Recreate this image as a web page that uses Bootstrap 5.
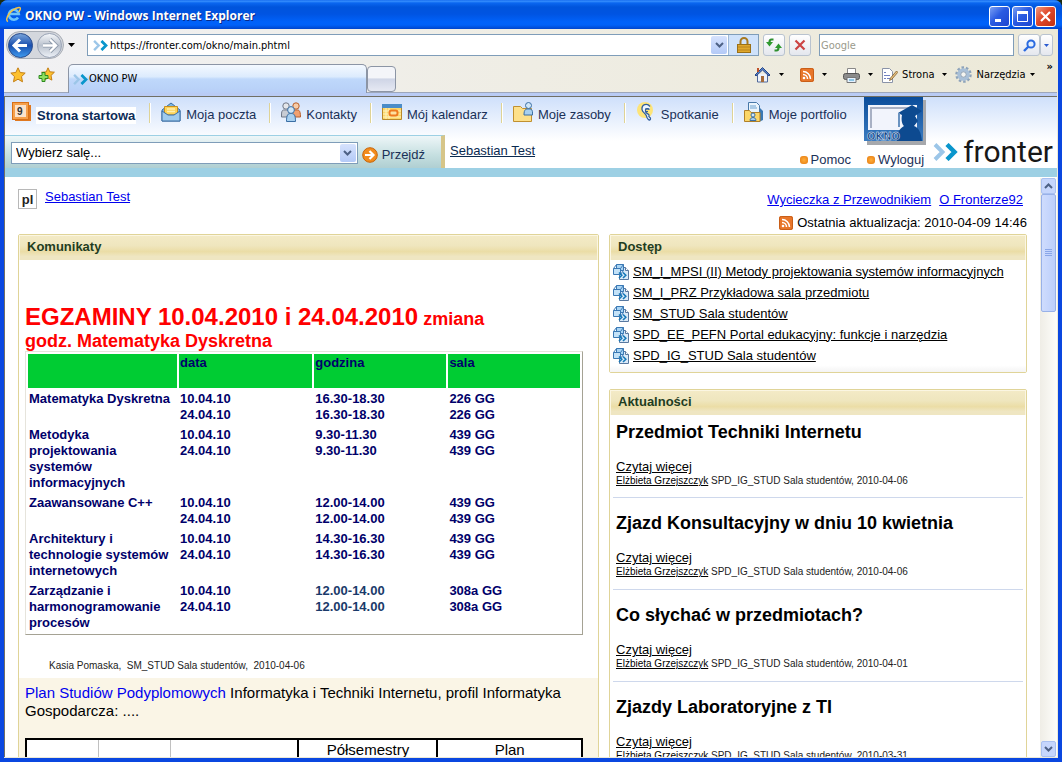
<!DOCTYPE html>
<html lang="pl">
<head>
<meta charset="utf-8">
<meta name="viewport" content="width=device-width, initial-scale=1">
<title>OKNO PW - Windows Internet Explorer</title>
<link href="https://cdn.jsdelivr.net/npm/bootstrap@5.3.0/dist/css/bootstrap.min.css" rel="stylesheet">
<style>
  body { font: 13px/16px "Liberation Sans", Arial, sans-serif; color: #000; background: #1c2b10; }
  button { padding: 0; border: 0; background: none; color: inherit; }
  svg { display: block; flex: none; }
  .app-window { border-radius: 8px 8px 0 0; background: #0a47e0; }
  .ui-font { font: 11px/14px "DejaVu Sans Condensed", "DejaVu Sans", sans-serif; }

  /* title bar */
  .titlebar { flex: none; height: 29px; padding: 0 6px; color: #fff;
    background: linear-gradient(#0a5fea 0, #3a92ff 1px, #0a66f0 3px, #0054dc 7px, #0054e2 14px, #0062fa 22px, #0061f8 25px, #0045cc 29px); }
  .titlebar h1 { font: bold 12px/16px "Open Sans", sans-serif; text-shadow: 1px 1px 0 #0a2a8a; padding-top: 2px; }
  .cap-group { gap: 2px; }
  .cap-btn { width: 21px; height: 21px; border: 1px solid #fff; border-radius: 3px;
    background: linear-gradient(135deg, #7ba0f4, #2a5be2 45%, #1e46d0); display: flex; align-items: center; justify-content: center; }
  .cap-close { background: linear-gradient(135deg, #f09a80, #e0482a 45%, #c03010); }

  /* browser frame */
  .frame-body { margin: 0 4px 4px; border-right: 1px solid #ece9d8; border-bottom: 1px solid #ece9d8; background: #fff; }
  .toolbars { flex: none; background: linear-gradient(90deg, #f1f1f4, #efede4 50%, #ece9d8); }
  .addr-row { height: 32px; padding: 0 4px 0 2px; }
  .round-nav { border-radius: 16px; border: 1px solid #a9aeb6; background: #d4d7dd; height: 28px; padding: 0 1px; }
  .field-box { border: 1px solid #7f9db9; background: #fff; height: 22px; }
  .field-box input { border: 0; outline: 0; padding: 0 1px; background: none; min-width: 0; height: 20px; }
  .field-box input::placeholder { color: #9a9a8c; opacity: 1; }
  .combo-arrow { width: 16px; background: linear-gradient(#d6e2fd, #b4caf7); border-radius: 2px; margin: 1px; display: flex; align-items: center; justify-content: center; }
  .lock-cell { width: 30px; background: #cfe2fb; border-left: 1px solid #9db8d6; display: flex; align-items: center; justify-content: center; }
  .tool-btn { width: 22px; height: 22px; border: 1px solid #b9c3cf; border-radius: 3px; background: linear-gradient(#fff, #e4e7ee); display: flex; align-items: center; justify-content: center; }
  .tool-btn-slim { width: 13px; }
  .search-field { width: 195px; }
  .tab-row { height: 32px; border-bottom: 1px solid #9da7bb; padding-left: 6px; }
  .star-group { padding-right: 13px; }
  .page-tab { width: 299px; height: 29px; border: 1px solid #8c95a5; border-bottom: 0; border-radius: 5px 5px 0 0;
    background: linear-gradient(#f4f9ff 0, #dcebfd 42%, #bfd8fb 50%, #b9d2f8 85%, #b8cdf6); margin-bottom: -1px; padding: 0 3px; }
  .new-tab { width: 29px; height: 26px; border: 1px solid #8c95a5; border-radius: 4px; background: linear-gradient(#f4f5f9 45%, #cfd5e6 50%, #e6e9f3); }
  .blue-strip { height: 4px; background: #b9cbf4; border-bottom: 1px solid #716f64; }

  /* portal header */
  .portal { border-left: 1px solid #716f64; }
  .portal-head { flex: none; background: linear-gradient(#cfe0fb 0, #fff 44px); border-bottom: 9px solid #9dd0e4; color: #1a3158; }
  .portal-head a { color: inherit; text-decoration: none; }
  .top-row { height: 38px; padding-left: 7px; }
  .nav-list { height: 36px; }
  .nav-list li { display: flex; align-items: center; height: 32px; }
  .nav-list li + li::before { content: ""; width: 2px; height: 20px; margin: 0 10px 0 13px; background: #ded396; border-right: 1px solid #fff; }
  .nav-list svg { margin-right: 5px; margin-top: -2px; }
  .nav-list span { padding-top: 4px; }
  .nav-list .now { background: #fff; padding: 1px 1px 0; margin: 4px 0 0 -1px; font-weight: bold; color: #0d2c58; }
  .okno-logo { margin-left: 17px; margin-bottom: -12px; }
  .low-row { height: 33px; }
  .room-panel { width: 440px; height: 33px; border-top: 1px solid #9dd0e4; border-right: 4px solid #d6c588; background: linear-gradient(#eef6f8, #c5dfe0 60%, #b0cfd2); padding: 2px 0 0 6px; }
  .room-panel select { appearance: none; border: 0; outline: 0; background: #fff; padding: 0 4px; font: 13px/18px "Liberation Sans", Arial, sans-serif; height: 20px; }
  .portal-head a.user-link { text-decoration: underline; margin-left: 5px; color: #0a2a50; }
  .bullet { width: 8px; height: 8px; border-radius: 3px; background: radial-gradient(#ffae3a, #e57a10); margin-right: 3px; }
  .brand-name { font: 400 30px/30px "Open Sans", Roboto, sans-serif; font-family: Roboto, sans-serif; color: #181818; margin-left: 4px; }

  /* scrolling page */
  .page-area { padding: 12px 13px 0; overflow: hidden; }
  .page-area a { color: #000; text-decoration: underline; }
  .page-area a.plain-blue { color: #0000ee; }
  .page-top { margin-bottom: 3px; }
  .tour-links { padding-top: 3px; margin-bottom: 7px; }
  .lang-box { width: 19px; height: 20px; border: 1px solid #b8b8b8; font-weight: bold; color: #222; text-align: center; line-height: 20px; }
  .columns { display: grid; grid-template-columns: 581fr 418fr; gap: 10px; align-items: start; }
  .panel { border: 1px solid #e0d498; border-radius: 2px; background: #fff; }
  .panel h2 { font: bold 13px/16px "Liberation Sans", Arial, sans-serif; color: #1f3d1f; height: 25px; margin: 0; padding: 3px 7px 0;
    border: 1px solid #fbf6e2; border-bottom: 0; background: linear-gradient(#f3eac6 0, #efe6be 40%, #ebdda6 65%, #efe6c2 85%); }
  .notice { padding: 42px 6px 0; }
  .notice h3 { font: bold 18px/20px "Liberation Sans", Arial, sans-serif; color: #f00; margin: 0; }
  .notice h3 b { font-size: 24px; line-height: 29px; }
  .exam { width: 558px; max-width: 100%; border: 1px solid; border-color: #e6e4dc #a5a294 #a5a294 #e6e4dc; border-collapse: separate; border-spacing: 2px; color: #00006a; font-weight: bold; table-layout: fixed; }
  .exam th, .exam td { padding: 1px; vertical-align: top; line-height: 16px; }
  .exam th { background: #00cc33; height: 34px; }
  .exam .muted-hours { color: #1a3a6a; }
  .fine { font-size: 10px; line-height: 12px; color: #222; }
  .byline { margin: 0; padding: 25px 24px 6px; }
  .plan { background: #faf5e6; padding: 6px 5px 0 6px; font-size: 15px; line-height: 18px; }
  .plan p { margin: 0 0 18px; }
  .plan table { width: 558px; max-width: 100%; table-layout: fixed; border: 2px solid #000; border-collapse: collapse; background: #fff; text-align: center; font-size: 15px; }
  .plan td { border-left: 1px solid #c0c0c0; height: 50px; vertical-align: top; padding: 1px; }
  .plan td.heavy { border-left: 2px solid #000; }
  .rooms { padding: 1px 3px 6px; background: linear-gradient(#fff 94%, #f4f4f4); }
  .rooms li { height: 21px; gap: 3px; }
  .news article { margin: 0 3px; padding: 15px 3px 10px; border-bottom: 1px solid #ced8ec; height: 92px; }
  .news article:first-of-type { height: 83px; padding-top: 7px; }
  .news h3 { font: bold 18px/20px "Liberation Sans", Arial, sans-serif; margin: 0 0 17px; }
  .news p { margin: 0; line-height: 16px; }
  .news p.fine { line-height: 12px; }

  .scroll-track { width: 17px; background: linear-gradient(90deg, #efede6, #fdfdfa); padding: 0 1px; margin-top: 1px; }
  .scroll-btn { width: 15px; height: 16px; border-radius: 2px; border: 1px solid #a9c0f0; background: #c6d6fc; display: flex; align-items: center; justify-content: center; }
  .scroll-thumb { height: 118px; border: 1px solid #98b1e8; border-radius: 2px; background: linear-gradient(90deg, #cfdcfd, #bccffb); display: flex; align-items: center; justify-content: center; }
</style>
<script src="https://cdn.jsdelivr.net/npm/bootstrap@5.3.0/dist/js/bootstrap.bundle.min.js"></script>
</head>
<body>
<svg width="0" height="0" class="position-absolute" aria-hidden="true">
  <symbol id="i-fr" viewBox="0 0 18 12"><path d="M2 1l5 5-5 5" fill="none" stroke="#9cc6e8" stroke-width="2.6"/><path d="M10 1l5 5-5 5" fill="none" stroke="#0a96cc" stroke-width="3"/></symbol>
  <symbol id="i-tri" viewBox="0 0 7 4"><path d="M0 0h7L3.500 4z"/></symbol>
  <symbol id="i-chev" viewBox="0 0 9 6"><path d="M1 1l3.500 3.500L8 1" fill="none" stroke="#4d6185" stroke-width="2"/></symbol>
  <symbol id="i-rss" viewBox="0 0 14 14"><rect width="14" height="14" rx="2" fill="#e8762a"/><rect x=".5" y=".5" width="13" height="13" rx="2" fill="none" stroke="#c85e18"/><circle cx="4" cy="10" r="1.300" fill="#fff"/><path d="M3 6.500a4.500 4.500 0 0 1 4.500 4.500M3 3.500a7.500 7.500 0 0 1 7.500 7.500" fill="none" stroke="#fff" stroke-width="1.500"/></symbol>
  <symbol id="i-room" viewBox="0 0 17 16"><path d="M6.500 3.500h6l3 3v9h-9z" fill="#dbeaf8" stroke="#5878a0"/><path d="M12.500 3.500v3h3" fill="#fff" stroke="#5878a0"/><path d="M3.500.500h7v6h-7z" fill="#a9d4f4" stroke="#3a78b4"/><path d="M.500 4.500h7v6h-7z" fill="#c4e2f8" stroke="#3a78b4"/><path d="M.500 4.500l3-4M7.500 4.500l3-4M7.500 10.500l3-4" fill="none" stroke="#3a78b4"/><path d="M6 8.500l2.800 2.800L6 14M10 8.500l2.800 2.800L10 14" fill="none" stroke="#1678b8" stroke-width="1.600"/></symbol>
</svg>

<div class="app-window vh-100 d-flex flex-column overflow-hidden">
  <header class="titlebar d-flex align-items-center">
    <svg width="15" height="17" viewBox="0 0 15 17"><path d="M12 11.500a5 5 0 1 1 .8-3.500H4" fill="none" stroke="#6cc4fa" stroke-width="2.600"/><path d="M2 15.500C-2 14 4 3 13 1.500c2.500-.2 1 3-.2 4.500" fill="none" stroke="#f2c34a" stroke-width="1.500"/></svg>
    <h1 class="m-0 ms-1 flex-grow-1">OKNO PW - Windows Internet Explorer</h1>
    <div class="cap-group d-flex mt-1">
      <button class="cap-btn" aria-label="Minimalizuj"><svg width="13" height="13"><path d="M2 9h6v3H2z" fill="#fff"/></svg></button>
      <button class="cap-btn" aria-label="Maksymalizuj"><svg width="13" height="13"><path d="M1.500 2.500h10v9h-10z" fill="none" stroke="#fff"/><path d="M1 1h11v3H1z" fill="#fff"/></svg></button>
      <button class="cap-btn cap-close" aria-label="Zamknij"><svg width="13" height="13"><path d="M2 2l9 9M11 2l-9 9" stroke="#fff" stroke-width="2.200"/></svg></button>
    </div>
  </header>

  <div class="frame-body flex-grow-1 d-flex flex-column overflow-hidden">
    <div class="toolbars ui-font">
      <div class="addr-row d-flex align-items-center">
        <div class="round-nav d-flex align-items-center gap-1">
          <button aria-label="Wstecz"><svg width="25" height="25" viewBox="0 0 25 25"><defs><linearGradient id="gb" x2="0" y2="1"><stop offset="0" stop-color="#7ba6dc"/><stop offset=".5" stop-color="#1a4fae"/><stop offset="1" stop-color="#3f9cf0"/></linearGradient></defs><circle cx="12.500" cy="12.500" r="12" fill="url(#gb)" stroke="#2b4c8c"/><path d="M6 12.500h13M12 6.500l-6 6 6 6" fill="none" stroke="#fff" stroke-width="3"/></svg></button>
          <button aria-label="Dalej"><svg width="25" height="25" viewBox="0 0 25 25"><defs><linearGradient id="gf" x2="0" y2="1"><stop offset="0" stop-color="#f6f8fb"/><stop offset=".5" stop-color="#b9c1cd"/><stop offset="1" stop-color="#eef2f8"/></linearGradient></defs><circle cx="12.500" cy="12.500" r="12" fill="url(#gf)" stroke="#98a2b4"/><path d="M6 12.500h13M13 6.500l6 6-6 6" fill="none" stroke="#8a97a8" stroke-width="4"/><path d="M6 12.500h13M13 6.500l6 6-6 6" fill="none" stroke="#fff" stroke-width="2.400"/></svg></button>
        </div>
        <svg class="ms-1 me-2" width="7" height="4"><use href="#i-tri"/></svg>
        <div class="field-box flex-grow-1 d-flex align-items-stretch ps-1 ms-1 me-1">
          <svg class="align-self-center" width="17" height="11"><use href="#i-fr"/></svg>
          <input class="flex-grow-1" aria-label="Adres" value="https://fronter.com/okno/main.phtml">
          <button class="combo-arrow" aria-label="Pokaż adresy"><svg width="9" height="6"><use href="#i-chev"/></svg></button>
          <div class="lock-cell"><svg width="14" height="16" viewBox="0 0 14 16"><path d="M3.500 8V4.500a3.500 3.500 0 0 1 7 0V8" fill="none" stroke="#a87a20" stroke-width="2"/><rect x=".5" y="7.500" width="13" height="8" fill="#e0a82c" stroke="#9a7018"/><path d="M1 10h12M1 13h12" stroke="#b88420"/></svg></div>
        </div>
        <button class="tool-btn me-1" aria-label="Odśwież"><svg width="16" height="16" viewBox="0 0 16 16"><path d="M7.500 2.500h-2q-2 0-2 3M8.500 13.500h2q2 0 2-3" fill="none" stroke="#2f8f2f" stroke-width="2.200"/><path d="M0 5h7L3.500 9.500zM9 11h7l-3.500-4.500z" fill="#2f9a2f"/></svg></button>
        <button class="tool-btn me-2" aria-label="Zatrzymaj"><svg width="12" height="12"><path d="M1.500 1.500l9 9M10.500 1.500l-9 9" stroke="#cc4444" stroke-width="2.200"/></svg></button>
        <div class="field-box search-field d-flex me-1"><input class="w-100" aria-label="Szukaj" placeholder="Google"></div>
        <div class="d-flex">
          <button class="tool-btn" aria-label="Wyszukaj"><svg width="13" height="13"><circle cx="8" cy="5" r="3.600" fill="#e4f0ff" stroke="#2a6ae0" stroke-width="2"/><path d="M5.500 7.500L1 12" stroke="#2a6ae0" stroke-width="2.400"/></svg></button>
          <button class="tool-btn tool-btn-slim" aria-label="Dostawcy"><svg width="5" height="3" fill="#2a5ad0"><use href="#i-tri"/></svg></button>
        </div>
      </div>

      <div class="tab-row d-flex align-items-end">
        <div class="star-group d-flex gap-2 align-self-center pb-1">
          <button class="me-1" aria-label="Ulubione"><svg width="16" height="16" viewBox="0 0 16 16"><path d="M8 .8l2.200 4.700 5 .6-3.700 3.500 1 5.200L8 12.200l-4.500 2.600 1-5.200L.8 6.100l5-.6z" fill="#fdc02e" stroke="#c47f14"/></svg></button>
          <button aria-label="Dodaj do ulubionych"><svg width="17" height="16" viewBox="0 0 17 16"><path d="M10 .8l1.800 4 4.600.4-3.400 3.300.9 4.600L10 11l-3.900 2.200.9-4.600-3.400-3.300 4.600-.4z" fill="#fdc02e" stroke="#c47f14"/><path d="M4 5.500h3v3h3v3H7v3H4v-3H1v-3h3z" fill="#8fe060" stroke="#2c8a20"/></svg></button>
        </div>
        <div class="page-tab d-flex align-items-center"><svg width="17" height="11"><use href="#i-fr"/></svg><span>OKNO PW</span></div>
        <button class="new-tab" aria-label="Nowa karta"></button>
        <div class="ms-auto d-flex align-items-center align-self-center pb-1">
          <svg width="17" height="17" viewBox="0 0 17 17"><path d="M3.500 8v8h10V8" fill="#eef3fb" stroke="#50689a"/><path d="M1 9l7.500-7.500L16 9l-1 1-6.500-6L2 10z" fill="#5a82c4" stroke="#27488a"/><path d="M3 2h2v4H3z" fill="#c0522a"/><path d="M7 10h3v6H7z" fill="#a66a38"/></svg>
          <svg class="ms-2" width="5" height="3"><use href="#i-tri"/></svg>
          <svg class="ms-3" width="14" height="14"><use href="#i-rss"/></svg>
          <svg class="ms-2 me-3" width="5" height="3"><use href="#i-tri"/></svg>
          <svg width="17" height="16" viewBox="0 0 17 16"><path d="M4.500 1.500h8v5h-8z" fill="#fff" stroke="#888"/><rect x=".5" y="6.500" width="16" height="6" rx="2" fill="#8b8b8b" stroke="#555"/><path d="M4 10.500h9v5H4z" fill="#e6f2ff" stroke="#777"/><path d="M6 13h5" stroke="#39c"/></svg>
          <svg class="ms-2" width="5" height="3"><use href="#i-tri"/></svg>
          <a href="#strona" class="d-flex align-items-center text-reset text-decoration-none ms-2">
            <svg width="17" height="16" viewBox="0 0 17 16"><path d="M1.500 1.500h7l3 3v11h-10z" fill="#fff" stroke="#8a93a8"/><path d="M3 5.500h2M3 8.500h6M3 11.500h2m1 0h3" stroke="#7080c0"/><path d="M15.500 4l-6 7-1 2.500 2.300-1.200 6-7z" fill="#e8c080" stroke="#80602c" stroke-width=".8"/></svg><span class="ms-1">Strona</span><svg class="ms-2" width="5" height="3"><use href="#i-tri"/></svg></a>
          <a href="#narzedzia" class="d-flex align-items-center text-reset text-decoration-none ms-2">
            <svg width="17" height="17" viewBox="0 0 17 17"><circle cx="8.500" cy="8.500" r="7" fill="none" stroke="#8ea3ba" stroke-width="2.500" stroke-dasharray="2.500 1.900"/><circle cx="8.500" cy="8.500" r="4.600" fill="#f4f4f0" stroke="#a9c0d8" stroke-width="3.400"/><circle cx="8.500" cy="8.500" r="2.700" fill="none" stroke="#6f859f" stroke-width=".7"/></svg><span class="ms-1">Narzędzia</span><svg class="ms-1" width="5" height="3"><use href="#i-tri"/></svg></a>
          <button class="ms-2 me-1 mb-3 ps-1 fw-bold" aria-label="Więcej">»</button>
        </div>
      </div>
      <div class="blue-strip"></div>
    </div>

    <div class="portal flex-grow-1 d-flex flex-column overflow-hidden">
      <header class="portal-head">
        <div class="top-row d-flex align-items-start">
          <ul class="nav-list list-unstyled d-flex m-0">
            <li><svg width="20" height="20" viewBox="0 0 20 20"><path d="M3 3h16v16H3z" fill="#e07820"/><rect x=".5" y=".5" width="16" height="17" fill="#f6a04c" stroke="#d87018"/><path d="M3 3h11v12H3z" fill="#fbe3cc"/><text x="5" y="13" font-family="Liberation Sans" font-weight="bold" font-size="10" fill="#333">9</text></svg><a class="now" href="#start">Strona startowa</a></li>
            <li><svg width="20" height="20" viewBox="0 0 20 20"><path d="M1 8l9-7 9 7v11H1z" fill="#7db4e0" stroke="#3a6ea4"/><path d="M3.500 4.500h13V13h-13z" fill="#fdd45a" stroke="#c89020"/><path d="M6 7h8M6 9.500h8" stroke="#fff0b0" stroke-width="1.400"/><path d="M1 9l6 4h6l6-4v10H1z" fill="#9fcbee" stroke="#3a6ea4"/></svg><a href="#poczta"><span class="d-block">Moja poczta</span></a></li>
            <li><svg width="20" height="20" viewBox="0 0 20 20"><path d="M.5 13c0-6 2-5 4-5s4 0 4 5v2h-8z" fill="#c8ccd4" stroke="#707888"/><circle cx="5" cy="4" r="3.200" fill="#e4e6ea" stroke="#707888"/><path d="M11 15v-2c0-5 2-5 4-5s4.500-1 4.500 7z" fill="#f0a070" stroke="#b8602c"/><circle cx="15" cy="4" r="3.200" fill="#f8cca8" stroke="#b8602c"/><path d="M5.500 19.500c0-7 1.500-8 4.500-8s4.500 1 4.500 8z" fill="#a8d0f0" stroke="#3a6ea4"/><circle cx="10" cy="8" r="3.400" fill="#cfe6f8" stroke="#3a6ea4"/></svg><a href="#kontakty"><span class="d-block">Kontakty</span></a></li>
            <li><svg width="20" height="18" viewBox="0 0 20 18"><path d="M.5 1.500h19v15H.5z" fill="#fbd668" stroke="#b8882c"/><path d="M0 1h20v4H0z" fill="#4a8cc8"/><path d="M1 8h18M1 11h18M1 14h18M4 5v11M7 5v11" stroke="#fff2c0"/><rect x="7.500" y="7.500" width="8" height="5" rx="2" fill="#fce0a0" stroke="#ee7a20" stroke-width="2"/></svg><a href="#kalendarz"><span class="d-block">Mój kalendarz</span></a></li>
            <li><svg width="20" height="20" viewBox="0 0 20 20"><path d="M.5 19.500v-15h7l2 2h9v13z" fill="#fde08a" stroke="#c09030"/><path d="M11 13c0-6 2-6 4.500-6s4.500 0 4 6z" fill="#a8d0f0" stroke="#3a6ea4"/><circle cx="15.500" cy="3.500" r="3" fill="#cfe6f8" stroke="#3a6ea4"/></svg><a href="#zasoby"><span class="d-block">Moje zasoby</span></a></li>
            <li><svg width="20" height="20" viewBox="0 0 20 20"><circle cx="9" cy="8" r="8" fill="#fde478"/><path d="M14 4.500C11 .5 5.500 2.500 6 7.500c.3 3 4 4 4.500 6.500.5 3 3 5.500 4 3 .5-2-2.500-1.500-1.500-3.500.8-1.500-3-1.500-3.500-4S11 5.500 13.500 7.500" fill="#eef6ff" stroke="#2f5e9c" stroke-width="1.300"/><path d="M9 7h4M10 9.500h2" stroke="#2f5e9c"/></svg><a href="#spotkanie"><span class="d-block">Spotkanie</span></a></li>
            <li><svg width="20" height="20" viewBox="0 0 20 20"><path d="M4.500.500h8l3 3v9h-11z" fill="#eaf4fc" stroke="#4878a8"/><path d="M6 4h6M6 6h7" stroke="#6aa0d0"/><path d="M16 6l3 3v9l-3 1.500z" fill="#3a78b4"/><path d="M.5 19.500v-11h5l1.500 2h9v9z" fill="#fbd668" stroke="#b08028"/><circle cx="9" cy="13" r="2" fill="#cfe6f8" stroke="#3a6ea4"/><path d="M6 18.500c0-4 6-4 6 0z" fill="#a8d0f0" stroke="#3a6ea4"/></svg><a href="#portfolio"><span class="d-block">Moje portfolio</span></a></li>
          </ul>
          <svg class="okno-logo" width="62" height="48" viewBox="0 0 62 48"><defs><linearGradient id="ok" x2="0" y2="1"><stop offset="0" stop-color="#0a4c9a"/><stop offset="1" stop-color="#3c7cc0"/></linearGradient></defs><path d="M3 3h59v45H3z" fill="#a6a8ac"/><path d="M0 0h59v44H0z" fill="url(#ok)"/><path d="M4 8h49v25H4z" fill="#f2f4fc"/><path d="M7 31V11h46" fill="none" stroke="#a8b0c4" stroke-width="2"/><path d="M34 16l14-8 10 6-7 5 3 5-4 5c5 2 7 6 8 15H33c0-8 2-12 7-15-2-2-3-6-2-11z" fill="#0d4a90"/><path d="M35 16v14" stroke="#6a92c0" stroke-width="2"/><text x="3" y="43" font-family="DejaVu Sans" font-weight="bold" font-size="10" fill="#0a3a80" stroke="#e6f0fa" stroke-width=".5">OKNO</text></svg>
        </div>
        <div class="low-row d-flex align-items-start">
          <form class="room-panel d-flex align-items-center">
            <div class="field-box d-flex flex-grow-1"><select class="flex-grow-1" aria-label="Wybierz salę"><option>Wybierz salę...</option></select><span class="combo-arrow"><svg width="9" height="6"><use href="#i-chev"/></svg></span></div>
            <button type="button" class="d-flex align-items-center ms-1 me-3 mt-1"><svg class="me-1" width="16" height="16"><circle cx="8" cy="8" r="7.300" fill="#f28c1c" stroke="#c86408"/><path d="M3 8h8M7.500 4l4 4-4 4" fill="none" stroke="#fff" stroke-width="2.200"/></svg>Przejdź</button>
          </form>
          <a class="user-link mt-2" href="#user">Sebastian Test</a>
          <div class="ms-auto d-flex align-items-center align-self-end pe-1">
            <a class="d-flex align-items-center me-3 pt-3" href="#pomoc"><i class="bullet"></i>Pomoc</a>
            <a class="d-flex align-items-center pt-3" href="#wyloguj"><i class="bullet"></i>Wyloguj</a>
            <svg class="ms-2" width="27" height="18" viewBox="0 0 18 12"><use href="#i-fr"/></svg>
            <span class="brand-name">fronter</span>
          </div>
        </div>
      </header>

      <div class="d-flex flex-grow-1 overflow-hidden">
        <main class="page-area flex-grow-1">
          <div class="page-top d-flex justify-content-between">
            <div class="d-flex align-items-start"><span class="lang-box me-2">pl</span><a class="plain-blue" href="#test">Sebastian Test</a></div>
            <div class="text-end">
              <div class="tour-links"><a class="plain-blue me-2" href="#tour">Wycieczka z Przewodnikiem</a><a class="plain-blue me-1" href="#about">O Fronterze92</a></div>
              <div class="d-flex align-items-center justify-content-end"><svg class="me-1" width="14" height="14"><use href="#i-rss"/></svg>Ostatnia aktualizacja: 2010-04-09 14:46</div>
            </div>
          </div>
          <div class="columns">
            <section class="panel">
              <h2>Komunikaty</h2>
              <div class="notice">
                <h3><b>EGZAMINY 10.04.2010 i 24.04.2010</b> zmiana<br>godz. Matematyka Dyskretna</h3>
                <table class="exam">
                  <colgroup><col style="width:27.300%"><col style="width:24.400%"><col style="width:24.200%"><col></colgroup>
                  <thead><tr><th></th><th>data</th><th>godzina</th><th>sala</th></tr></thead>
                  <tbody>
                    <tr><td>Matematyka Dyskretna</td><td>10.04.10<br>24.04.10</td><td>16.30-18.30<br>16.30-18.30</td><td>226 GG<br>226 GG</td></tr>
                    <tr><td>Metodyka<br>projektowania systemów informacyjnych</td><td>10.04.10<br>24.04.10</td><td>9.30-11.30<br>9.30-11.30</td><td>439 GG<br>439 GG</td></tr>
                    <tr><td>Zaawansowane C++</td><td>10.04.10<br>24.04.10</td><td>12.00-14.00<br>12.00-14.00</td><td>439 GG<br>439 GG</td></tr>
                    <tr><td>Architektury i technologie systemów internetowych</td><td>10.04.10<br>24.04.10</td><td>14.30-16.30<br>14.30-16.30</td><td>439 GG<br>439 GG</td></tr>
                    <tr><td>Zarządzanie i harmonogramowanie procesów</td><td>10.04.10<br>24.04.10</td><td class="muted-hours">12.00-14.00<br>12.00-14.00</td><td>308a GG<br>308a GG</td></tr>
                  </tbody>
                </table>
                <p class="fine byline">Kasia Pomaska,&nbsp; SM_STUD Sala studentów,&nbsp; 2010-04-06</p>
              </div>
              <div class="plan">
                <p><a class="plain-blue text-decoration-none" href="#plan">Plan Studiów Podyplomowych</a> Informatyka i Techniki Internetu, profil Informatyka<br>Gospodarcza: ....</p>
                <table><colgroup><col style="width:13%"><col style="width:13%"><col style="width:23%"><col style="width:25%"><col></colgroup>
                  <tr><td></td><td></td><td></td><td class="heavy">Półsemestry</td><td class="heavy">Plan</td></tr></table>
              </div>
            </section>

            <div>
              <section class="panel mb-3">
                <h2>Dostęp</h2>
                <ul class="rooms list-unstyled m-0">
                  <li class="d-flex align-items-center"><svg width="17" height="16"><use href="#i-room"/></svg><a href="#r1">SM_I_MPSI (II) Metody projektowania systemów informacyjnych</a></li>
                  <li class="d-flex align-items-center"><svg width="17" height="16"><use href="#i-room"/></svg><a href="#r2">SM_I_PRZ Przykładowa sala przedmiotu</a></li>
                  <li class="d-flex align-items-center"><svg width="17" height="16"><use href="#i-room"/></svg><a href="#r3">SM_STUD Sala studentów</a></li>
                  <li class="d-flex align-items-center"><svg width="17" height="16"><use href="#i-room"/></svg><a href="#r4">SPD_EE_PEFN Portal edukacyjny: funkcje i narzędzia</a></li>
                  <li class="d-flex align-items-center"><svg width="17" height="16"><use href="#i-room"/></svg><a href="#r5">SPD_IG_STUD Sala studentów</a></li>
                </ul>
              </section>
              <section class="panel news">
                <h2>Aktualności</h2>
                <article><h3>Przedmiot Techniki Internetu</h3><p><a href="#n1">Czytaj więcej</a></p><p class="fine"><a href="#eg">Elżbieta Grzejszczyk</a> SPD_IG_STUD Sala studentów, 2010-04-06</p></article>
                <article><h3>Zjazd Konsultacyjny w dniu 10 kwietnia</h3><p><a href="#n2">Czytaj więcej</a></p><p class="fine"><a href="#eg">Elżbieta Grzejszczyk</a> SPD_IG_STUD Sala studentów, 2010-04-06</p></article>
                <article><h3>Co słychać w przedmiotach?</h3><p><a href="#n3">Czytaj więcej</a></p><p class="fine"><a href="#eg">Elżbieta Grzejszczyk</a> SPD_IG_STUD Sala studentów, 2010-04-01</p></article>
                <article><h3>Zjazdy Laboratoryjne z TI</h3><p><a href="#n4">Czytaj więcej</a></p><p class="fine"><a href="#eg">Elżbieta Grzejszczyk</a> SPD_IG_STUD Sala studentów, 2010-03-31</p></article>
              </section>
            </div>
          </div>
        </main>
        <aside class="scroll-track d-flex flex-column">
          <button class="scroll-btn" aria-label="W górę"><svg width="9" height="6"><path d="M1 5l3.500-3.500L8 5" fill="none" stroke="#4d6185" stroke-width="2"/></svg></button>
          <div class="scroll-thumb"><svg width="7" height="8"><path d="M0 .5h7M0 2.500h7M0 4.500h7M0 6.500h7" stroke="#8aa6e8"/></svg></div>
          <button class="scroll-btn mt-auto" aria-label="W dół"><svg width="9" height="6"><use href="#i-chev"/></svg></button>
        </aside>
      </div>
    </div>
  </div>
</div>
</body>
</html>
